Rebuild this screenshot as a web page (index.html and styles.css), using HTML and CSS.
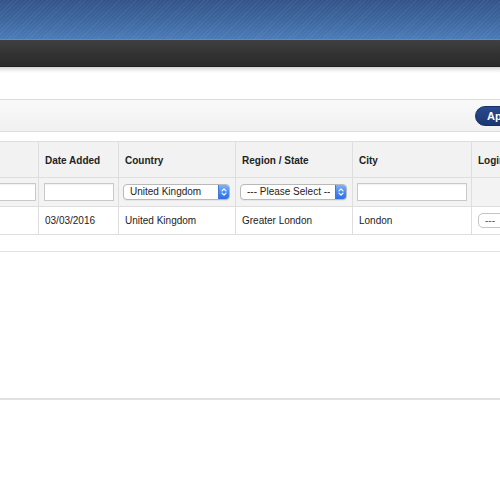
FILE: index.html
```html
<!DOCTYPE html>
<html>
<head>
<meta charset="utf-8">
<link rel="stylesheet" href="styles.css">
</head>
<body>
<div class="page">
  <header class="brand"></header>
  <nav class="nav"></nav>
  <div class="nav-shadow"></div>

  <div class="toolbar">
    <button class="apply-btn">Apply Filter</button>
  </div>

  <div class="grid-wrap">
    <table class="grid">
      <colgroup>
        <col class="c-first">
        <col class="c-date">
        <col class="c-country">
        <col class="c-region">
        <col class="c-city">
        <col class="c-login">
      </colgroup>
      <thead>
        <tr class="head-row">
          <th></th>
          <th>Date Added</th>
          <th>Country</th>
          <th>Region / State</th>
          <th>City</th>
          <th>Login</th>
        </tr>
        <tr class="filter-row">
          <td><input class="txt txt-first" type="text"></td>
          <td><input class="txt txt-date" type="text"></td>
          <td>
            <div class="mac-select">
              <span class="sel-label">United Kingdom</span>
              <span class="stepper">
                <svg viewBox="0 0 11 14" width="11" height="14"><path d="M3.3 5.7 L5.5 3.6 L7.7 5.7 M3.3 8.3 L5.5 10.4 L7.7 8.3" fill="none" stroke="#fff" stroke-width="1.3" stroke-linecap="round" stroke-linejoin="round"/></svg>
              </span>
            </div>
          </td>
          <td>
            <div class="mac-select">
              <span class="sel-label">--- Please Select ---</span>
              <span class="stepper">
                <svg viewBox="0 0 11 14" width="11" height="14"><path d="M3.3 5.7 L5.5 3.6 L7.7 5.7 M3.3 8.3 L5.5 10.4 L7.7 8.3" fill="none" stroke="#fff" stroke-width="1.3" stroke-linecap="round" stroke-linejoin="round"/></svg>
              </span>
            </div>
          </td>
          <td><input class="txt txt-city" type="text"></td>
          <td></td>
        </tr>
      </thead>
      <tbody>
        <tr class="data-row">
          <td></td>
          <td>03/03/2016</td>
          <td>United Kingdom</td>
          <td>Greater London</td>
          <td>London</td>
          <td><div class="login-select"><span class="dash">---</span><span class="dot"></span></div></td>
        </tr>
      </tbody>
    </table>
  </div>

  <div class="panel-end"></div>
  <div class="footer-line"></div>
</div>
</body>
</html>
```

FILE: styles.css
```css
* { box-sizing: border-box; }

html, body {
  margin: 0;
  padding: 0;
  background: #fff;
  overflow: hidden;
}

body {
  font-family: "Liberation Sans", Arial, Helvetica, sans-serif;
  font-size: 10px;
  color: #222;
}

.page {
  width: 540px;
}

.brand {
  height: 40px;
  border-bottom: 1px solid #6a8ab4;
  background:
    repeating-linear-gradient(135deg, rgba(255,255,255,0.05) 0 1px, rgba(0,0,0,0) 1px 3px),
    linear-gradient(to bottom, #33548a 0%, #3e68a0 55%, #4a7bb8 100%);
}

.nav {
  height: 27px;
  background: linear-gradient(to bottom, #404040 0%, #333 50%, #2a2a2a 100%);
  border-bottom: 1px solid #222;
}

.nav-shadow {
  height: 6px;
  background: linear-gradient(to bottom, #d2d2d2 0%, #eeeeee 50%, #fff 100%);
}

.toolbar {
  margin-top: 26px;
  height: 33px;
  border-top: 1px solid #dcdcdc;
  border-bottom: 1px solid #dcdcdc;
  background: linear-gradient(to bottom, #f9f9f9 0%, #f1f1f1 100%);
  display: flex;
  align-items: center;
  justify-content: flex-start;
  padding-left: 475px;
}

.apply-btn {
  height: 20px;
  padding: 0 11px 0 11px;
  border: 1px solid #172f66;
  border-radius: 10px;
  background: linear-gradient(to bottom, #2a4a8c 0%, #1c3673 100%);
  color: #fff;
  font-family: "Liberation Sans", Arial, sans-serif;
  font-weight: bold;
  font-size: 11px;
  white-space: nowrap;
  line-height: 18px;
}

.grid-wrap {
  margin-top: 9px;
  overflow: hidden;
}

.grid {
  margin-left: -62px;
  border-collapse: collapse;
  table-layout: fixed;
  width: 650px;
}

.c-first { width: 100px; }
.c-date { width: 80px; }
.c-country { width: 117px; }
.c-region { width: 117px; }
.c-city { width: 119px; }
.c-login { width: 117px; }

.grid th,
.grid td {
  border: 1px solid #dedede;
  padding: 0 6px;
  text-align: left;
  vertical-align: middle;
  white-space: nowrap;
  overflow: hidden;
}

.head-row th {
  height: 36px;
  padding-top: 2px;
  background: #f2f2f2;
  font-weight: bold;
  font-size: 10px;
  color: #222;
}

.filter-row td {
  height: 29px;
  background: #f3f3f3;
  padding: 0 4px;
}

.data-row td {
  height: 28px;
  background: #fff;
  color: #222;
}

.txt {
  display: block;
  height: 18px;
  border: 1px solid #c9c9c9;
  box-shadow: inset 0 1px 1px rgba(0,0,0,0.06);
  background: #fff;
  margin: 0;
  padding: 0 3px;
  font-size: 10px;
}

.txt-first { width: 93px; }
.txt-date { width: 70px; margin-left: 1px; }
.txt-city { width: 110px; }

.mac-select {
  display: flex;
  align-items: stretch;
  height: 16px;
  width: 107px;
  border: 1px solid #b9b9b9;
  border-radius: 4px;
  background: #fff;
  overflow: hidden;
  box-shadow: 0 1px 0 rgba(0,0,0,0.05);
}

.sel-label {
  flex: 1;
  min-width: 0;
  overflow: hidden;
  white-space: nowrap;
  padding-left: 6px;
  margin-right: 5px;
  font-size: 10px;
  line-height: 14px;
  color: #222;
}

.stepper {
  width: 11px;
  display: flex;
  align-items: center;
  justify-content: center;
  background: linear-gradient(to bottom, #7fb3f7 0%, #4a8bee 50%, #2f6fe0 100%);
  border-left: 1px solid #3f79d8;
}

.stepper svg { display: block; width: 11px; height: 14px; }

.login-select {
  display: flex;
  align-items: center;
  gap: 4px;
  height: 15px;
  width: 60px;
  border: 1px solid #c4c4c4;
  border-radius: 5px;
  background: #fff;
  padding-left: 6px;
  color: #555;
  font-size: 10px;
}

.dot {
  width: 8px;
  height: 8px;
  background: #f2c24a;
  border-radius: 2px;
  margin-left: 6px;
}

.panel-end {
  height: 17px;
  border-bottom: 1px solid #e2e2e2;
}

.footer-line {
  margin-top: 146px;
  height: 2px;
  background: #e1e1e1;
}
```
